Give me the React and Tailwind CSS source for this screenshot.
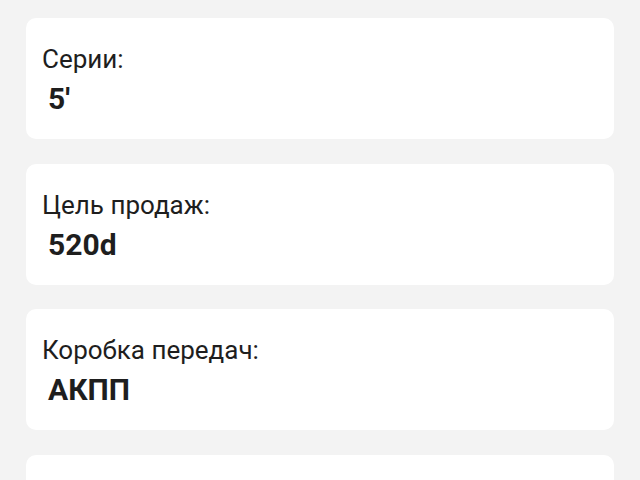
export default function App() {
  const items = [
    { label: "Серии:", value: "5'" },
    { label: "Цель продаж:", value: "520d" },
    { label: "Коробка передач:", value: "АКПП" },
  ];

  return (
    <div
      className="h-[480px] overflow-hidden bg-[#f3f3f3] px-[26px] pt-[18px] flex flex-col gap-[24.5px]"
      style={{ fontFamily: "Roboto, 'Noto Sans', sans-serif" }}
    >
      {items.map((it) => (
        <div
          key={it.label}
          className="shrink-0 h-[121px] bg-white rounded-[10px] px-[16px] pt-[26px]"
        >
          <div className="text-[26px] leading-[30px] text-[#1e1e1e]">{it.label}</div>
          <div className="mt-[8px] pl-[6px] text-[30px] leading-[34px] font-bold text-[#1e1e1e]">
            {it.value}
          </div>
        </div>
      ))}
      {/* next card, content is below the fold */}
      <div className="shrink-0 h-[121px] bg-white rounded-[10px]" />
    </div>
  );
}
